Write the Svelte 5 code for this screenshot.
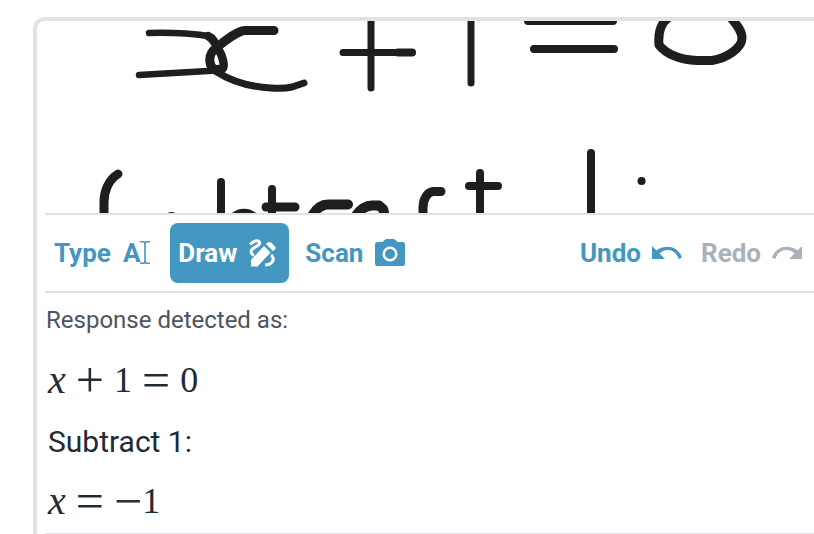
<script>
  let mode = $state('draw');
</script>

<main class="panel">
  <section class="board" aria-label="Handwriting area">
    <svg viewBox="45 21 769 192" preserveAspectRatio="xMinYMin slice" role="img" aria-label="Handwritten equation">
      <g class="ink">
        <path stroke-width="6.500" d="M149 33C172 32 203 34 210 37M139 75L208 71Q217 71 222 69" />
        <path stroke-width="8.500" d="M208 36C215 39 217 48 221 54C225 65 225 70 218 69" />
        <path stroke-width="9" d="M274 30.500H245C237 31 226 40 216 48C207 55 208 67 217 71" />
        <path stroke-width="7" d="M217 72C234 83 253 87 271 88Q284 89 292 87L304 83" />
        <path stroke-width="7" d="M343 52.500H380L412 52.500M371 18L371 88" />
        <path stroke-width="8" d="M398 52.500H412" />
        <path stroke-width="7" d="M471 18V83" />
        <path stroke-width="8" d="M528 21H613M534 49H614" />
        <path stroke-width="9" d="M668 18C660 24 658 33 659 45C666 54 680 60 697 60.500H712C727 58 742 48 742 38C742 31 737 25 732 19" />
        <path stroke-width="9" d="M118 174C108 180 104 192 104 202V215" />
        <path stroke-width="8" d="M221 182V216M171 216H172" />
        <path stroke-width="10" d="M235 217C240 212.500 248 212.500 253 217" />
        <path stroke-width="9" d="M266 207H295" />
        <path stroke-width="8" d="M272 189V216" />
        <path stroke-width="10" d="M312 216C316 209 321 204.500 328 204.500H348M355 217C361 208 366 205.500 372 205.500H379L383 209Q384 210 384 215" />
        <path stroke-width="9" d="M423 216V208C423 198 428 192 433 191.500H441" />
        <path stroke-width="8" d="M480 173V216M469 186H498M591 153V217" />
        <path stroke-width="8" d="M641.5 181H641.6" />
      </g>
    </svg>
  </section>

  <nav class="toolbar" aria-label="Input tools">
    <button class="tool" class:active={mode === 'type'} onclick={() => (mode = 'type')}>
      Type
      <span class="cursor-icon" aria-hidden="true">A<svg width="10" height="26" viewBox="0 0 10 26"><path d="M0 1.8H3Q5 1.8 5 4Q5 1.8 7 1.8H10M5 4V21M0 23.2H3Q5 23.2 5 21Q5 23.2 7 23.2H10" fill="none" stroke="currentColor" stroke-width="1.6" /></svg></span>
    </button>
    <button class="tool" class:active={mode === 'draw'} onclick={() => (mode = 'draw')}>
      Draw
      <svg width="28" height="28" viewBox="0 0 28 28" aria-hidden="true">
        <path d="M2 27.500V21L15 7L21.500 13.500L8.500 27.500ZM17 5L19 3.200Q20.500 2.500 22 3.500L26.200 7.700Q27.200 9 26.200 10.300L23.800 12Z" fill="currentColor" />
        <path d="M1.200 5.500C4.500 1.500 9 .8 10.500 3C12.500 7.500 2 8 2 12.500Q2.200 15 5 16.500M22 16C27 20 23 26 16 26" fill="none" stroke="currentColor" stroke-width="3" />
      </svg>
    </button>
    <button class="tool" class:active={mode === 'scan'} onclick={() => (mode = 'scan')}>
      Scan
      <svg width="30" height="28" viewBox="0 0 30 28" aria-hidden="true">
        <path fill="currentColor" fill-rule="evenodd" d="M2.500 3H7.500L9.500 1Q10.500 0 12 0H18Q19.500 0 20.500 1L22.500 3H27.500Q30 3 30 5.500V24.500Q30 27 27.500 27H2.500Q0 27 0 24.500V5.500Q0 3 2.500 3ZM15 7.500A7.500 7.500 0 1 0 15 22.500A7.500 7.500 0 1 0 15 7.500ZM15 10A5 5 0 1 1 15 20A5 5 0 1 1 15 10Z" />
      </svg>
    </button>
    <span class="history">
      <button class="tool">
        Undo
        <svg width="30" height="14" viewBox="0 0 30 14" aria-hidden="true">
          <path fill="currentColor" d="M0 0L4.500 4.500C13 -2 26 0 30 11.500L26.800 13C23.500 3.500 14 1.500 7.500 7.500L13 13H0Z" />
        </svg>
      </button>
      <button class="tool" disabled>
        Redo
        <svg width="30" height="14" viewBox="0 0 30 14" aria-hidden="true">
          <path fill="currentColor" d="M30 0L25.500 4.500C17 -2 4 0 0 11.500L3.200 13C6.500 3.500 16 1.500 22.500 7.500L17 13H30Z" />
        </svg>
      </button>
    </span>
  </nav>

  <section class="result">
    <p class="caption">Response detected as:</p>
    <p class="math"><i>x</i><span class="op">+</span><span>1</span><span class="op">=</span><span>0</span></p>
    <p class="text">Subtract 1:</p>
    <p class="math"><i>x</i><span class="op">=</span><span class="neg"><span class="op">−</span>1</span></p>
  </section>
</main>

<style>
  :global(body) {
    background: #fff;
    overflow: hidden;
  }
  .panel {
    box-sizing: border-box;
    margin: 17px 0 0 33px;
    padding: 0 0 16px 8px;
    border: 4px solid #dfe3e8;
    border-right: 0;
    border-bottom: 0;
    border-top-left-radius: 12px;
    font-family: Roboto, "Liberation Sans", sans-serif;
    color: #212b36;
  }
  .board {
    height: 192px;
    border-bottom: 2px solid #dfe3e8;
  }
  .board svg {
    display: block;
    width: 100%;
    height: 100%;
  }
  .ink {
    fill: none;
    stroke: #1e1e1e;
    stroke-linecap: round;
    stroke-linejoin: round;
  }
  .toolbar {
    display: flex;
    align-items: center;
    gap: 8px;
    padding: 8px 1px;
    border-bottom: 2px solid #dfe3e8;
  }
  .tool {
    display: flex;
    align-items: center;
    gap: 12px;
    height: 60px;
    padding: 0 12px 0 8px;
    border: 0;
    border-radius: 8px;
    background: none;
    color: #4497c1;
    font: 700 26px/32px Roboto, "Liberation Sans", sans-serif;
    cursor: pointer;
  }
  .tool.active {
    background: #4497c1;
    color: #fff;
  }
  .tool:disabled {
    color: #a8b2bd;
    cursor: default;
  }
  .tool svg {
    flex: none;
  }
  .cursor-icon {
    display: flex;
    align-items: center;
  }
  .history {
    display: flex;
    margin-left: auto;
  }
  .history .tool {
    gap: 11px;
    padding-right: 11px;
  }
  .result {
    padding-bottom: 3px;
    border-bottom: 2px solid #dfe3e8;
  }
  .result p {
    margin: 0;
  }
  .result .caption {
    padding: 12px 0 15px 1px;
    font-size: 24px;
    line-height: 30px;
    color: #4b5561;
  }
  .result .text {
    padding: 2px 0 0 3px;
    font-size: 30px;
    line-height: 60px;
  }
  .result .math {
    display: flex;
    align-items: center;
    gap: 10px;
    height: 60px;
    padding-left: 3px;
    font: 36px/60px "Liberation Serif", serif;
  }
  .result .math:last-child {
    height: 58px;
  }
  .math i {
    font-size: 40px;
  }
  .op {
    font-size: 50px;
  }
  .neg {
    display: flex;
    align-items: center;
  }
</style>
